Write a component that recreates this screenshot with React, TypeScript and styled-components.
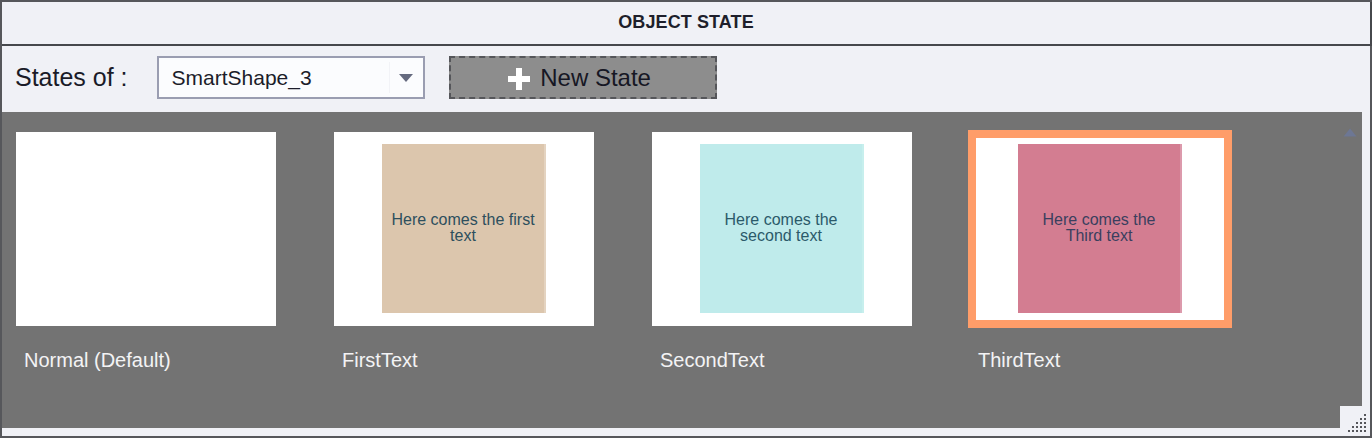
import styled, { createGlobalStyle, css } from "styled-components";

type StateItem = {
  name: string;
  text?: string;
  fill?: string;
  edge?: string;
  ink?: string;
  selected?: boolean;
};

const states: StateItem[] = [
  { name: "Normal (Default)" },
  { name: "FirstText", text: "Here comes the first text", fill: "#dcc6ad", edge: "#e4d3c0", ink: "#2d4f5d" },
  { name: "SecondText", text: "Here comes the second text", fill: "#bfebeb", edge: "#c7efed", ink: "#2b5a6a" },
  { name: "ThirdText", text: "Here comes the Third text", fill: "#d37d91", edge: "#dc9aac", ink: "#3a3f5e", selected: true },
];

export default function App() {
  return (
    <>
      <GlobalStyle />
      <Window>
        <Header>OBJECT STATE</Header>
        <Toolbar>
          <ToolbarLabel>States of :</ToolbarLabel>
          <Select>
            <span>SmartShape_3</span>
            <SelectArrow />
          </Select>
          <NewStateButton>
            <PlusIcon width="22" height="22" viewBox="0 0 22 22">
              <rect x="8" y="0" width="6" height="22" fill="#ffffff" />
              <rect x="0" y="8" width="22" height="6" fill="#ffffff" />
            </PlusIcon>
            New State
          </NewStateButton>
        </Toolbar>
        <Body>
          <Gallery>
            <Cards>
              {states.map((s) => (
                <StateCell key={s.name}>
                  <Thumb selected={!!s.selected}>
                    {s.text && (
                      <Shape fill={s.fill!} edge={s.edge!} ink={s.ink!}>
                        {s.text}
                      </Shape>
                    )}
                  </Thumb>
                  <StateName>{s.name}</StateName>
                </StateCell>
              ))}
            </Cards>
            <ScrollColumn>
              <ScrollUp width="14" height="9" viewBox="0 0 14 9">
                <path d="M7 0.5 L13.5 8.5 L0.5 8.5 Z" fill="#6d7898" />
              </ScrollUp>
              <Corner />
            </ScrollColumn>
          </Gallery>
        </Body>
        <Grip width="18" height="18" viewBox="0 0 18 18">
          {[0, 1, 2, 3, 4].flatMap((r) =>
            [0, 1, 2, 3, 4]
              .filter((c) => c + r <= 4)
              .map((c) => <rect key={`${r}-${c}`} x={16 - c * 4} y={16 - r * 4} width="2" height="2" fill="#55565b" />)
          )}
        </Grip>
      </Window>
    </>
  );
}

const GlobalStyle = createGlobalStyle`
  html, body {
    margin: 0;
    padding: 0;
    background: #f0f1f6;
  }
  * {
    box-sizing: border-box;
  }
`;

const Window = styled.div`
  position: relative;
  width: 1372px;
  height: 438px;
  border: 2px solid #56575b;
  background: #f0f1f6;
  display: flex;
  flex-direction: column;
  font-family: "Liberation Sans", Arial, sans-serif;
`;

const Header = styled.div`
  height: 44px;
  margin-right: -2px;
  border-bottom: 2px solid #46484c;
  border-right: 2px solid #46484c;
  display: flex;
  align-items: center;
  justify-content: center;
  padding-bottom: 1px;
  font-size: 18px;
  font-weight: bold;
  color: #1e1f2b;
  letter-spacing: 0.1px;
`;

const Toolbar = styled.div`
  height: 66px;
  display: flex;
  align-items: center;
  padding: 0 0 3px 13px;
`;

const ToolbarLabel = styled.span`
  font-size: 25px;
  color: #1a1b28;
  margin-right: 29px;
  margin-top: -1px;
`;

const Select = styled.div`
  position: relative;
  width: 268px;
  height: 43px;
  border: 2px solid #9a9db1;
  background: #fbfcfe;
  display: flex;
  align-items: center;
  padding-left: 13px;
  font-size: 21px;
  color: #1c1d2a;

  &::after {
    content: "";
    position: absolute;
    left: 230px;
    top: 4px;
    bottom: 4px;
    width: 1px;
    background: #f2f3f7;
  }
`;

const SelectArrow = styled.span`
  position: absolute;
  right: 10px;
  top: 16px;
  width: 0;
  height: 0;
  border-left: 7px solid transparent;
  border-right: 7px solid transparent;
  border-top: 8px solid #656a7f;
`;

const NewStateButton = styled.button`
  margin-left: 24px;
  width: 268px;
  height: 43px;
  background: #8d8d8d;
  border: 2px dashed #55565a;
  display: flex;
  align-items: center;
  justify-content: center;
  gap: 10px;
  padding: 0 6px 0 0;
  font-family: "Liberation Sans", Arial, sans-serif;
  font-size: 24px;
  color: #161724;
  cursor: pointer;
`;

const PlusIcon = styled.svg`
  display: block;
  margin-top: 2px;
`;

const Body = styled.div`
  flex: 1;
  display: flex;
  padding: 0 8px 8px 0;
`;

const Gallery = styled.div`
  flex: 1;
  display: flex;
  background: #737373;
`;

const Cards = styled.div`
  flex: 1;
  display: flex;
  align-items: flex-start;
  gap: 58px;
  padding: 20px 0 0 14px;
`;

const StateCell = styled.div`
  width: 260px;
  display: flex;
  flex-direction: column;
`;

const Thumb = styled.div<{ selected: boolean }>`
  width: 260px;
  height: 194px;
  background: #ffffff;
  padding: 12px 48px 13px;
  display: flex;

  ${({ selected }) =>
    selected &&
    css`
      box-shadow: 0 0 0 2px #ff9d69, inset 0 0 0 6px #ff9d69;
    `}
`;

const Shape = styled.div<{ fill: string; edge: string; ink: string }>`
  flex: 1;
  background: ${({ fill }) => fill};
  border-right: 2px solid ${({ edge }) => edge};
  display: flex;
  align-items: center;
  justify-content: center;
  text-align: center;
  padding: 0 8px 1px;
  font-size: 16px;
  line-height: 16px;
  color: ${({ ink }) => ink};
`;

const StateName = styled.span`
  margin-top: 22px;
  padding-left: 8px;
  font-size: 20px;
  line-height: 24px;
  color: #f3f3f5;
`;

const ScrollColumn = styled.div`
  width: 22px;
  display: flex;
  flex-direction: column;
  align-items: center;
  justify-content: space-between;
  padding-top: 16px;
`;

const ScrollUp = styled.svg`
  display: block;
  margin-left: -2px;
  opacity: 0.9;
`;

const Corner = styled.div`
  width: 22px;
  height: 22px;
  background: #f0f1f6;
`;

const Grip = styled.svg`
  position: absolute;
  right: 4px;
  bottom: 4px;
  display: block;
`;
